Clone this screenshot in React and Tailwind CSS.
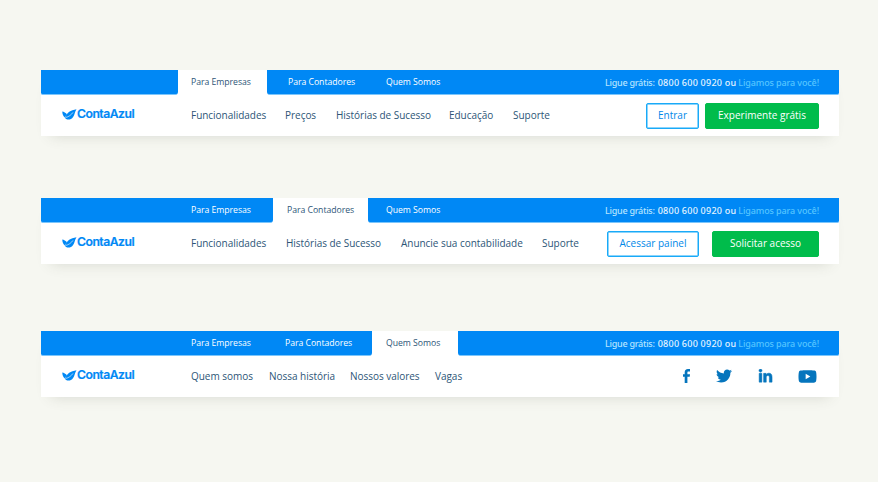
import React from "react";
import { FaTwitter, FaLinkedinIn, FaYoutube } from "react-icons/fa";

function Logo() {
  return (
    <div className="flex w-[129px] shrink-0 items-center text-[#0088f5]">
      <svg className="mb-[2px] h-[11px] w-[15px] shrink-0" viewBox="0 0 15 11" fill="currentColor">
        <path d="M.3 2.4C1.9 2.7 3.7 3.6 5 5.3C4.1 6.3 3.4 7.4 3.1 8.5C1.2 7.2 .2 5 .3 2.4Z" />
        <path d="M3.4 8.2C4.6 3.6 8.6 1 14.5.2C12.7 3 12.8 5.6 11.1 7.9C9.4 10.4 6.5 11.3 4.1 10C3.6 9.7 3 9.3 2.6 8.6Z" />
        <path d="M3.6 8.5C6.7 7.8 9.2 6 11 3.4" fill="none" stroke="white" strokeWidth=".6" />
      </svg>
      <span className="mb-[2px] font-['Inter'] text-[12.2px] leading-4 font-semibold tracking-[-0.5px] [-webkit-text-stroke:0.2px]">ContaAzul</span>
    </div>
  );
}

function Blue({ className, children }) {
  return (
    <div className={`flex h-[25px] items-center border-b border-[#7cc6fb] bg-[#0088f5] text-white ${className}`}>
      {children}
    </div>
  );
}

function Phone() {
  return (
    <span className="ml-auto flex w-[214px] shrink-0 pt-[1px] font-['Noto_Sans'] text-[9px] text-[#b5e4ff]">
      <span className="w-[53px] tracking-[-0.26px]">Ligue grátis:</span>
      <span className="w-[81px] tracking-[0.24px] text-[#e6f5ff]">0800 600 0920 ou</span>
      <span className="tracking-[-0.12px] text-[#55c5ff]">Ligamos para você!</span>
    </span>
  );
}

function Tab({ className, children }) {
  return <span className={`shrink-0 ${className}`}>{children}</span>;
}

function Panel({ tabs, children }) {
  return (
    <section className="h-[66px] w-[798px] bg-white shadow-[0_9px_14px_-10px_rgba(70,75,60,0.2)]">
      <div className="flex h-[25px] text-[8.7px] leading-[24px] font-[480] tracking-[-0.04px] whitespace-nowrap text-[#2d5577]">{tabs}</div>
      <div className="flex h-[41px] items-center pr-5 pb-[1px] pl-[21px] text-[10px] whitespace-nowrap text-[#2d5577]">
        <Logo />
        {children}
      </div>
    </section>
  );
}

function Nav({ items }) {
  return (
    <nav className="flex font-[450] tracking-[-0.03px]">
      {items.map(([label, width]) => (
        <span key={label} className={width}>{label}</span>
      ))}
    </nav>
  );
}

function Button({ filled, className, children }) {
  const tone = filled ? "bg-[#00bc4b] text-white border-[#00bc4b]" : "border-[#19aaf8] text-[#0088e8] shadow-[inset_0_0_0_0.5px_#19aaf8]";
  return (
    <button className={`mt-[2px] flex h-[26px] shrink-0 items-center justify-center rounded-[2px] border pb-[1px] font-medium ${tone} ${className}`}>
      {children}
    </button>
  );
}

export default function App() {
  return (
    <main className="flex h-[482px] w-[878px] flex-col bg-[#f6f7f1] pt-[70px] pl-[41px] font-['Open_Sans']">
      <Panel
        tabs={
          <>
            <Blue className="w-[137px] rounded-br-[3px] rounded-bl-[2px]" />
            <Tab className="w-[89px] pl-[13px]">Para Empresas</Tab>
            <Blue className="flex-1 rounded-br-[2px] rounded-bl-[3px] pr-5 pl-[21px]">
              <Tab className="w-[98px]">Para Contadores</Tab>
              <Tab className="">Quem Somos</Tab>
              <Phone />
            </Blue>
          </>
        }
      >
        <Nav items={[["Funcionalidades", "w-[94px]"], ["Preços", "w-[51px]"], ["Histórias de Sucesso", "w-[113px]"], ["Educação", "w-[64px]"], ["Suporte", "w-[50px]"]]} />
        <div className="ml-auto flex gap-[6px]">
          <Button className="w-[53px]">Entrar</Button>
          <Button filled className="w-[114px]">Experimente grátis</Button>
        </div>
      </Panel>
      <div className="h-[62px]" />
      <Panel
        tabs={
          <>
            <Blue className="w-[232px] rounded-br-[3px] rounded-bl-[2px] pl-[150px]"><Tab className="">Para Empresas</Tab></Blue>
            <Tab className="w-[95px] pl-[14px]">Para Contadores</Tab>
            <Blue className="flex-1 rounded-br-[2px] rounded-bl-[3px] pr-5 pl-[18px]">
              <Tab className="">Quem Somos</Tab>
              <Phone />
            </Blue>
          </>
        }
      >
        <Nav items={[["Funcionalidades", "w-[95px]"], ["Histórias de Sucesso", "w-[115px]"], ["Anuncie sua contabilidade", "w-[141px]"], ["Suporte", "w-[50px]"]]} />
        <div className="ml-auto flex gap-[13px]">
          <Button className="w-[92px]">Acessar painel</Button>
          <Button filled className="w-[107px]">Solicitar acesso</Button>
        </div>
      </Panel>
      <div className="h-[67px]" />
      <Panel
        tabs={
          <>
            <Blue className="w-[331px] rounded-br-[3px] rounded-bl-[2px] pl-[150px]">
              <Tab className="w-[94px]">Para Empresas</Tab>
              <Tab className="">Para Contadores</Tab>
            </Blue>
            <Tab className="w-[86px] pl-[14px]">Quem Somos</Tab>
            <Blue className="flex-1 rounded-br-[2px] rounded-bl-[3px] pr-5">
              <Phone />
            </Blue>
          </>
        }
      >
        <Nav items={[["Quem somos", "w-[78px]"], ["Nossa história", "w-[81px]"], ["Nossos valores", "w-[85px]"], ["Vagas", "w-[40px]"]]} />
        <div className="ml-auto flex items-center text-[#0575bd]">
          <svg className="mr-[26px] h-[14px] w-[7px]" viewBox="0 0 7 14" fill="currentColor">
            <path d="M1.7 14V7.7H0V5.2H1.7V3.6C1.7 1.3 2.8 0 5 0H7V2.5H5.5C4.7 2.5 4.4 2.8 4.4 3.6V5.2H7L6.7 7.7H4.4V14Z" />
          </svg>
          <FaTwitter className="mr-[26px] h-[16px] w-[16px]" />
          <FaLinkedinIn className="mr-[25px] h-[15px] w-[15px] stroke-current stroke-[16px]" />
          <FaYoutube className="mr-[2px] h-[19px] w-[19px]" />
        </div>
      </Panel>
    </main>
  );
}
